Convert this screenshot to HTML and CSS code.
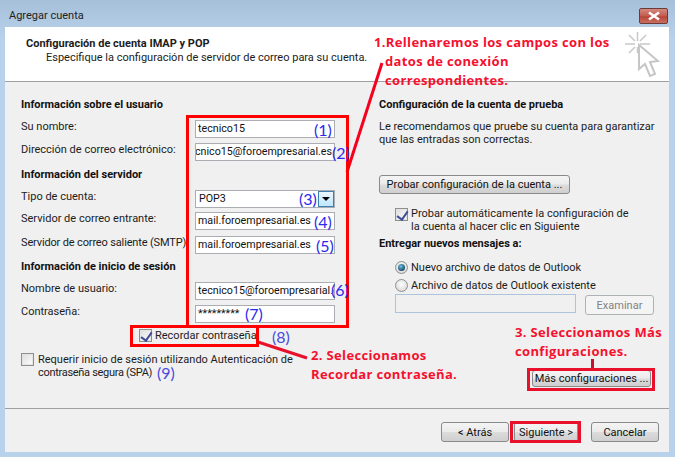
FILE: index.html
```html
<!DOCTYPE html>
<html lang="es">
<head>
<meta charset="utf-8">
<title>Agregar cuenta</title>
<link rel="stylesheet" href="styles.css">
</head>
<body>
<div class="window">
  <div class="titlebar">
    <span class="title">Agregar cuenta</span>
    <div class="close"><svg width="16" height="10" viewBox="0 0 16 10"><path d="M3 1.500l10 7M13 1.500l-10 7" stroke="#fff" stroke-width="2.600" fill="none"/></svg></div>
  </div>
  <div class="client">
    <header class="head">
      <div class="head-title">Configuración de cuenta IMAP y POP</div>
      <div class="head-sub">Especifique la configuración de servidor de correo para su cuenta.</div>
      <svg class="wizard" width="36" height="50" viewBox="0 0 36 50">
        <path d="M1 14h10M16 14h10M13.500 2v9M13.500 17v6M5 5l6 6M22 5l-6 6M5 23l6-6" stroke="#c8c8c8" stroke-width="1.500" fill="none"/>
        <path d="M15 15v24l6-5 5 12 5-2-5-12 8-1z" fill="#fff" stroke="#c6c6c6" stroke-width="2"/>
      </svg>
    </header>
    <main class="main">
      <section class="left">
        <h2 class="heading">Información sobre el usuario</h2>
        <div class="row r8"><span class="label">Su nombre:</span><div class="field">tecnico15</div></div>
        <div class="row r5"><span class="label">Dirección de correo electrónico:</span><div class="field clip-start"><span>tecnico15@foroempresarial.es</span></div></div>
        <h2 class="heading r5">Información del servidor</h2>
        <div class="row r8"><span class="label">Tipo de cuenta:</span><div class="field select">POP3<span class="arrow"></span></div></div>
        <div class="row r4"><span class="label">Servidor de correo entrante:</span><div class="field">mail.foroempresarial.es</div></div>
        <div class="row r6"><span class="label tight">Servidor de correo saliente (SMTP):</span><div class="field">mail.foroempresarial.es</div></div>
        <h2 class="heading r4">Información de inicio de sesión</h2>
        <div class="row r8"><span class="label">Nombre de usuario:</span><div class="field">tecnico15@foroempresarial.es</div></div>
        <div class="row r5"><span class="label">Contraseña:</span><div class="field">*********</div></div>
        <label class="check remember"><span class="box on"></span>Recordar contraseña</label>
        <label class="check spa"><span class="box"></span><span>Requerir inicio de sesión utilizando Autenticación de<br><span class="tighter">contraseña segura (SPA)</span></span></label>
      </section>
      <section class="right">
        <h2 class="heading">Configuración de la cuenta de prueba</h2>
        <p class="para">Le recomendamos que pruebe su cuenta para garantizar<br>que las entradas son correctas.</p>
        <button class="btn test">Probar configuración de la cuenta ...</button>
        <label class="check auto"><span class="box on"></span><span>Probar automáticamente la configuración de<br>la cuenta al hacer clic en Siguiente</span></label>
        <h2 class="heading deliver">Entregar nuevos mensajes a:</h2>
        <label class="radio first"><span class="dot on"></span>Nuevo archivo de datos de Outlook</label>
        <label class="radio"><span class="dot"></span>Archivo de datos de Outlook existente</label>
        <div class="browse"><div class="path"></div><button class="btn off">Examinar</button></div>
        <button class="btn more">Más configuraciones ...</button>
      </section>
    </main>
    <footer class="foot">
      <button class="btn nav">&lt; Atrás</button>
      <button class="btn nav next">Siguiente &gt;</button>
      <button class="btn nav cancel">Cancelar</button>
    </footer>
  </div>

  <svg class="lines" width="675" height="457" viewBox="0 0 675 457">
    <path d="M382 63L347 172" stroke="#f5001e" stroke-width="3" fill="none"/>
    <path d="M258 342L307 358" stroke="#e8102a" stroke-width="3" fill="none"/>
    <path d="M592.500 359V369" stroke="#c8102e" stroke-width="3" fill="none"/>
  </svg>
  <div class="mark m-fields"></div>
  <div class="mark m-remember"></div>
  <div class="mark m-more"></div>
  <div class="mark m-next"></div>

  <div class="note n1">1.Rellenaremos los campos con los<br><span class="ind">datos de conexión</span><br><span class="ind">correspondientes.</span></div>
  <div class="note n2">2. Seleccionamos<br>Recordar contraseña.</div>
  <div class="note n3">3. Seleccionamos Más<br>configuraciones.</div>

  <span class="num p1">(1)</span>
  <span class="num p2">(2)</span>
  <span class="num p3">(3)</span>
  <span class="num p4">(4)</span>
  <span class="num p5">(5)</span>
  <span class="num p6">(6)</span>
  <span class="num p7">(7)</span>
  <span class="num p8">(8)</span>
  <span class="num p9">(9)</span>
</div>
</body>
</html>
```
FILE: styles.css
```css
* { box-sizing: border-box; }
html, body { margin: 0; padding: 0; }
body { width: 675px; height: 457px; overflow: hidden; }
.window {
  position: relative;
  width: 675px;
  height: 457px;
  display: flex;
  flex-direction: column;
  background: linear-gradient(#a7c0da, #b9d2ec 40px, #b9d2ec);
  font: 11px/13px Roboto, sans-serif;
  color: #1c1c1c;
}
.titlebar {
  flex: none;
  height: 27px;
  padding: 8px 7px 0 9px;
  display: flex;
  justify-content: space-between;
  align-items: flex-start;
}
.title { line-height: 16px; color: #222; }
.close {
  width: 29px;
  height: 16px;
  border: 1px solid #6e3a36;
  border-radius: 2px;
  background: linear-gradient(#d38a7f, #c45a4d 50%, #b8453a 55%, #c9705f);
  display: flex;
  align-items: center;
  justify-content: center;
}
.client {
  flex: none;
  width: 664px;
  height: 425px;
  margin-left: 5px;
  background: #f0f0f0;
  display: flex;
  flex-direction: column;
}
.head {
  flex: none;
  height: 55px;
  background: #fff;
  border-bottom: 1px solid #a0a0a0;
  padding: 10px 0 0 21px;
  display: flex;
  flex-direction: column;
  position: relative;
}
.head-title { font-weight: 700; line-height: 14px; }
.head-sub { margin: 0 0 0 20px; line-height: 14px; }
.wizard { position: absolute; left: 619px; top: 3px; }
.main {
  flex: none;
  height: 326px;
  display: flex;
  padding-top: 14px;
}
.left { flex: none; width: 374px; padding-left: 16px; display: flex; flex-direction: column; }
.right { flex: 1; display: flex; flex-direction: column; align-items: flex-start; }
.heading { margin: 0; font-size: 11px; font-weight: 700; height: 16px; line-height: 18px; color: #111; flex: none; }
.row { display: flex; align-items: flex-start; height: 18px; flex: none; }
.r4 { margin-top: 4px; }
.r5 { margin-top: 5px; }
.r6 { margin-top: 6px; }
.r8 { margin-top: 8px; }
.label { width: 174px; flex: none; white-space: nowrap; }
.tight { letter-spacing: -.15px; }
.tighter { letter-spacing: -.3px; }
.field {
  flex: none;
  width: 140px;
  height: 18px;
  background: #fff;
  border: 1px solid #abadb3;
  padding-left: 2px;
  font-size: 10.7px;
  line-height: 16px;
  color: #111;
  overflow: hidden;
  white-space: nowrap;
  display: flex;
  position: relative;
}
.clip-start { justify-content: flex-end; padding: 0 2px 0 0; }
.clip-start span { flex: none; }
.select { padding-left: 3px; }
.arrow {
  position: absolute;
  right: 0;
  top: 0;
  width: 16px;
  height: 16px;
  border: 1px solid #3c7fb1;
  background: linear-gradient(#eaf6fd, #bee6fd);
}
.arrow::after {
  content: "";
  position: absolute;
  left: 3px;
  top: 5px;
  border: 4px solid transparent;
  border-top: 4px solid #000;
  border-bottom: 0;
}
.check, .radio { display: flex; align-items: flex-start; flex: none; }
.box {
  flex: none;
  width: 13px;
  height: 13px;
  border: 1px solid #8e8f8f;
  background: linear-gradient(135deg, #dcdcdc, #fff);
  box-shadow: inset 0 0 0 1px #e4e4e4;
  position: relative;
}
.box.on::after {
  content: "";
  position: absolute;
  left: 3px;
  top: 0;
  width: 5px;
  height: 9px;
  border: solid #3f4f94;
  border-width: 0 2px 2px 0;
  transform: rotate(35deg);
}
.remember { margin: 6px 0 0 118px; gap: 3px; line-height: 14px; white-space: nowrap; }
.spa { margin-top: 10px; gap: 4px; line-height: 13px; white-space: nowrap; }
.para { margin: 9px 0 0; line-height: 12.5px; white-space: nowrap; }
.btn {
  font: inherit;
  color: #111;
  padding: 0;
  border: 1px solid #8a8a8a;
  border-radius: 3px;
  background: linear-gradient(#f4f4f4, #ebebeb 48%, #dcdcdc 52%, #cfcfcf);
  white-space: nowrap;
}
.test { width: 191px; height: 19px; margin-top: 29px; }
.auto { margin: 14px 0 0 16px; gap: 3px; line-height: 12.5px; white-space: nowrap; }
.deliver { margin-top: 2px; }
.radio { margin: 5px 0 0 16px; gap: 3px; line-height: 13px; white-space: nowrap; }
.radio.first { margin-top: 10px; }
.dot {
  flex: none;
  width: 13px;
  height: 13px;
  border-radius: 50%;
  border: 1px solid #8e8f8f;
  background: radial-gradient(circle at 50% 40%, #fff, #d0d0d0);
  position: relative;
}
.dot.on::after {
  content: "";
  position: absolute;
  left: 2px;
  top: 2px;
  width: 7px;
  height: 7px;
  border-radius: 50%;
  background: radial-gradient(circle at 40% 35%, #6fc0e8, #17475f 75%);
}
.browse { display: flex; align-items: flex-start; gap: 9px; margin: 2px 0 0 16px; flex: none; }
.path { width: 181px; height: 19px; background: #f0f0f0; border: 1px solid #adc4dc; }
.off { width: 69px; height: 20px; margin-top: 1px; background: #f4f4f4; border-color: #adb2b5; color: #838383; }
.more { width: 119px; height: 17px; margin: 55px 0 0 153px; }
.foot {
  flex: 1;
  border-top: 1px solid #a0a0a0;
  display: flex;
  padding: 13px 0 0 436px;
  align-items: flex-start;
}
.nav { width: 68px; height: 20px; }
.next { margin-left: 5px; width: 64px; }
.cancel { margin-left: 13px; }

.lines { position: absolute; left: 0; top: 0; pointer-events: none; }
.mark { position: absolute; border: 3px solid #f5001e; }
.m-fields { left: 186px; top: 115px; width: 163px; height: 213px; border-color: #f00; }
.m-remember { left: 130px; top: 325px; width: 129px; height: 22px; border-color: #f00; }
.m-more { left: 527px; top: 368px; width: 128px; height: 23px; border-color: #e8102a; }
.m-next { left: 510px; top: 421px; width: 71px; height: 22px; border-color: #e8102a; }
.note {
  position: absolute;
  font: 700 13px/19px "Open Sans", sans-serif;
  color: #f5102e;
  white-space: nowrap;
  letter-spacing: .35px;
}
.ind { margin-left: 11px; }
.n1 { left: 374px; top: 33px; }
.n2 { left: 311px; top: 346px; }
.n3 { left: 515px; top: 323px; }
.num {
  position: absolute;
  font: 16px/18px Lato, sans-serif;
  color: #2a2aee;
  white-space: nowrap;
}
.p1 { left: 314px; top: 121px; }
.p2 { left: 332px; top: 144px; }
.p3 { left: 299px; top: 190px; }
.p4 { left: 314px; top: 213px; }
.p5 { left: 316px; top: 237px; }
.p6 { left: 331px; top: 281px; }
.p7 { left: 245px; top: 305px; }
.p8 { left: 272px; top: 328px; color: #4a4ae0; }
.p9 { left: 157px; top: 364px; color: #4a4ae0; }
```
